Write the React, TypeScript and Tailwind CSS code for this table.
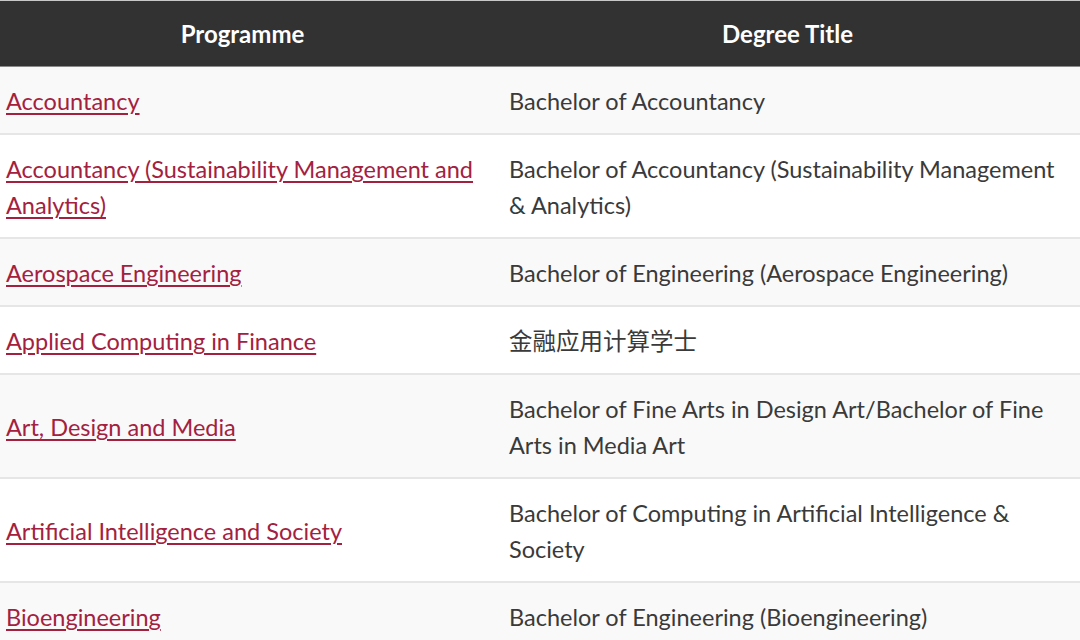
import React from 'react';

const rows: { programme: string; degree: string }[] = [
  { programme: 'Accountancy', degree: 'Bachelor of Accountancy' },
  {
    programme: 'Accountancy (Sustainability Management and Analytics)',
    degree: 'Bachelor of Accountancy (Sustainability Management & Analytics)',
  },
  { programme: 'Aerospace Engineering', degree: 'Bachelor of Engineering (Aerospace Engineering)' },
  { programme: 'Applied Computing in Finance', degree: '金融应用计算学士' },
  {
    programme: 'Art, Design and Media',
    degree: 'Bachelor of Fine Arts in Design Art/Bachelor of Fine Arts in Media Art',
  },
  {
    programme: 'Artificial Intelligence and Society',
    degree: 'Bachelor of Computing in Artificial Intelligence & Society',
  },
  { programme: 'Bioengineering', degree: 'Bachelor of Engineering (Bioengineering)' },
];

const App: React.FC = () => {
  return (
    <div
      className="w-[1080px] h-[640px] overflow-hidden bg-white"
      style={{ fontFamily: 'Lato, "Noto Sans CJK SC", sans-serif' }}
    >
      <div className="border-t border-[#c8c8c8] bg-[#323232] grid grid-cols-[485px_1fr] h-[67px] items-center text-white font-bold text-[24px] border-b border-b-[#8a8a8a]">
        <div className="text-center">Programme</div>
        <div className="text-center pl-[10px]">Degree Title</div>
      </div>
      {rows.map((row, i) => (
        <div
          key={i}
          className={`grid grid-cols-[485px_1fr] border-b-2 border-[#e6e6e6] text-[23.5px] leading-[36px] pt-[16px] pb-[14px] ${
            i % 2 === 0 ? 'bg-[#f9f9f9]' : 'bg-white'
          }`}
        >
          <div className="pl-[6px] pr-[4px] flex items-center">
            <a
              href="#"
              className="text-[#a3213f] underline decoration-[1.5px] underline-offset-[3px]"
            >
              {row.programme}
            </a>
          </div>
          <div className="pl-[24px] pr-[12px] text-[#3a3a3a] flex items-center">{row.degree}</div>
        </div>
      ))}
    </div>
  );
};

export default App;
